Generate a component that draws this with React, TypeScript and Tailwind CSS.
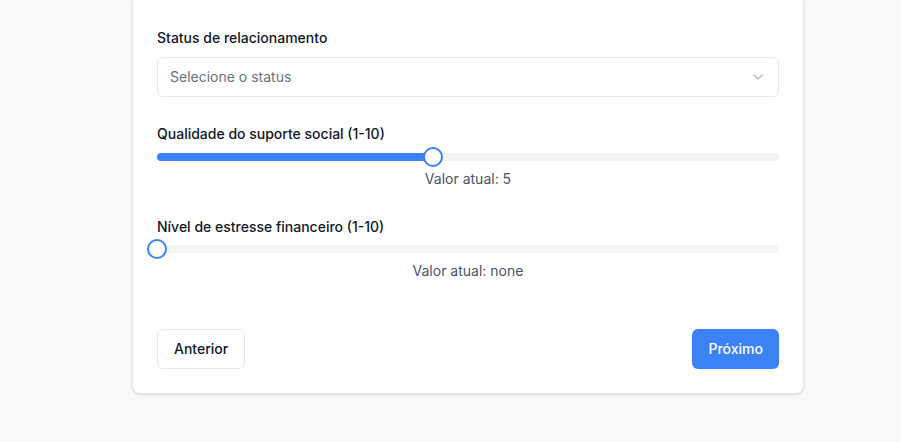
import React, { useState } from "react";
import { ChevronDown } from "lucide-react";

type SliderProps = {
  value: number | null;
  min: number;
  max: number;
  onChange: (v: number) => void;
};

const RangeField: React.FC<{ label: string; value: number | null; onChange: (v: number) => void; tight?: boolean }> = ({
  label,
  value,
  onChange,
  tight,
}) => (
  <div className="flex flex-col">
    <label className="text-sm font-medium leading-5 text-gray-900">{label}</label>
    <div className={tight ? "mt-2" : "mt-[9px]"}>
      <Slider value={value} min={1} max={10} onChange={onChange} />
    </div>
    <p className="mt-2 text-center text-sm leading-5 text-gray-600">
      Valor atual: {value === null ? "none" : value}
    </p>
  </div>
);

// simple slider: track + filled range + round thumb
const Slider: React.FC<SliderProps> = ({ value, min, max }) => {
  const pct = value === null ? 0 : ((value - min) / (max - min)) * 100;
  return (
    <div className="relative h-2 w-full rounded-full bg-gray-100">
      <div className="absolute inset-y-0 left-0 rounded-full bg-[#3b82f6]" style={{ width: `${pct}%` }} />
      <span
        className="absolute top-1/2 h-5 w-5 -translate-x-1/2 -translate-y-1/2 rounded-full border-2 border-[#3b82f6] bg-white"
        style={{ left: `${pct}%` }}
      />
    </div>
  );
};

const App: React.FC = () => {
  const [support, setSupport] = useState<number | null>(5);
  const [stress, setStress] = useState<number | null>(null);

  return (
    <div className="min-h-screen bg-[#f8f9fb] pl-[132px]" style={{ fontFamily: "Inter, 'Noto Sans', sans-serif" }}>
      <div className="w-[672px] rounded-b-lg border border-t-0 border-gray-200 bg-white px-6 pb-6 pt-7 shadow-sm">
        <div className="flex flex-col">
          <div className="flex flex-col">
            <label className="text-sm font-medium leading-5 text-gray-900">Status de relacionamento</label>
            <button
              type="button"
              className="mt-[9px] flex h-10 w-full items-center justify-between rounded-md border border-gray-200 bg-white px-3 text-sm text-gray-500"
            >
              <span>Selecione o status</span>
              <ChevronDown className="h-4 w-4 opacity-50" />
            </button>
          </div>

          <div className="mt-[27px]">
            <RangeField label="Qualidade do suporte social (1-10)" value={support} onChange={setSupport} />
          </div>

          <div className="mt-[28px]">
            <RangeField label="Nível de estresse financeiro (1-10)" value={stress} onChange={setStress} tight />
          </div>

          <div className="mt-12 flex items-center justify-between">
            <button
              type="button"
              className="h-10 rounded-md border border-gray-200 bg-white px-4 text-sm font-medium text-gray-900"
            >
              Anterior
            </button>
            <button type="button" className="h-10 rounded-md bg-[#3b82f6] px-4 text-sm font-medium text-white">
              Próximo
            </button>
          </div>
        </div>
      </div>
    </div>
  );
};

export default App;
